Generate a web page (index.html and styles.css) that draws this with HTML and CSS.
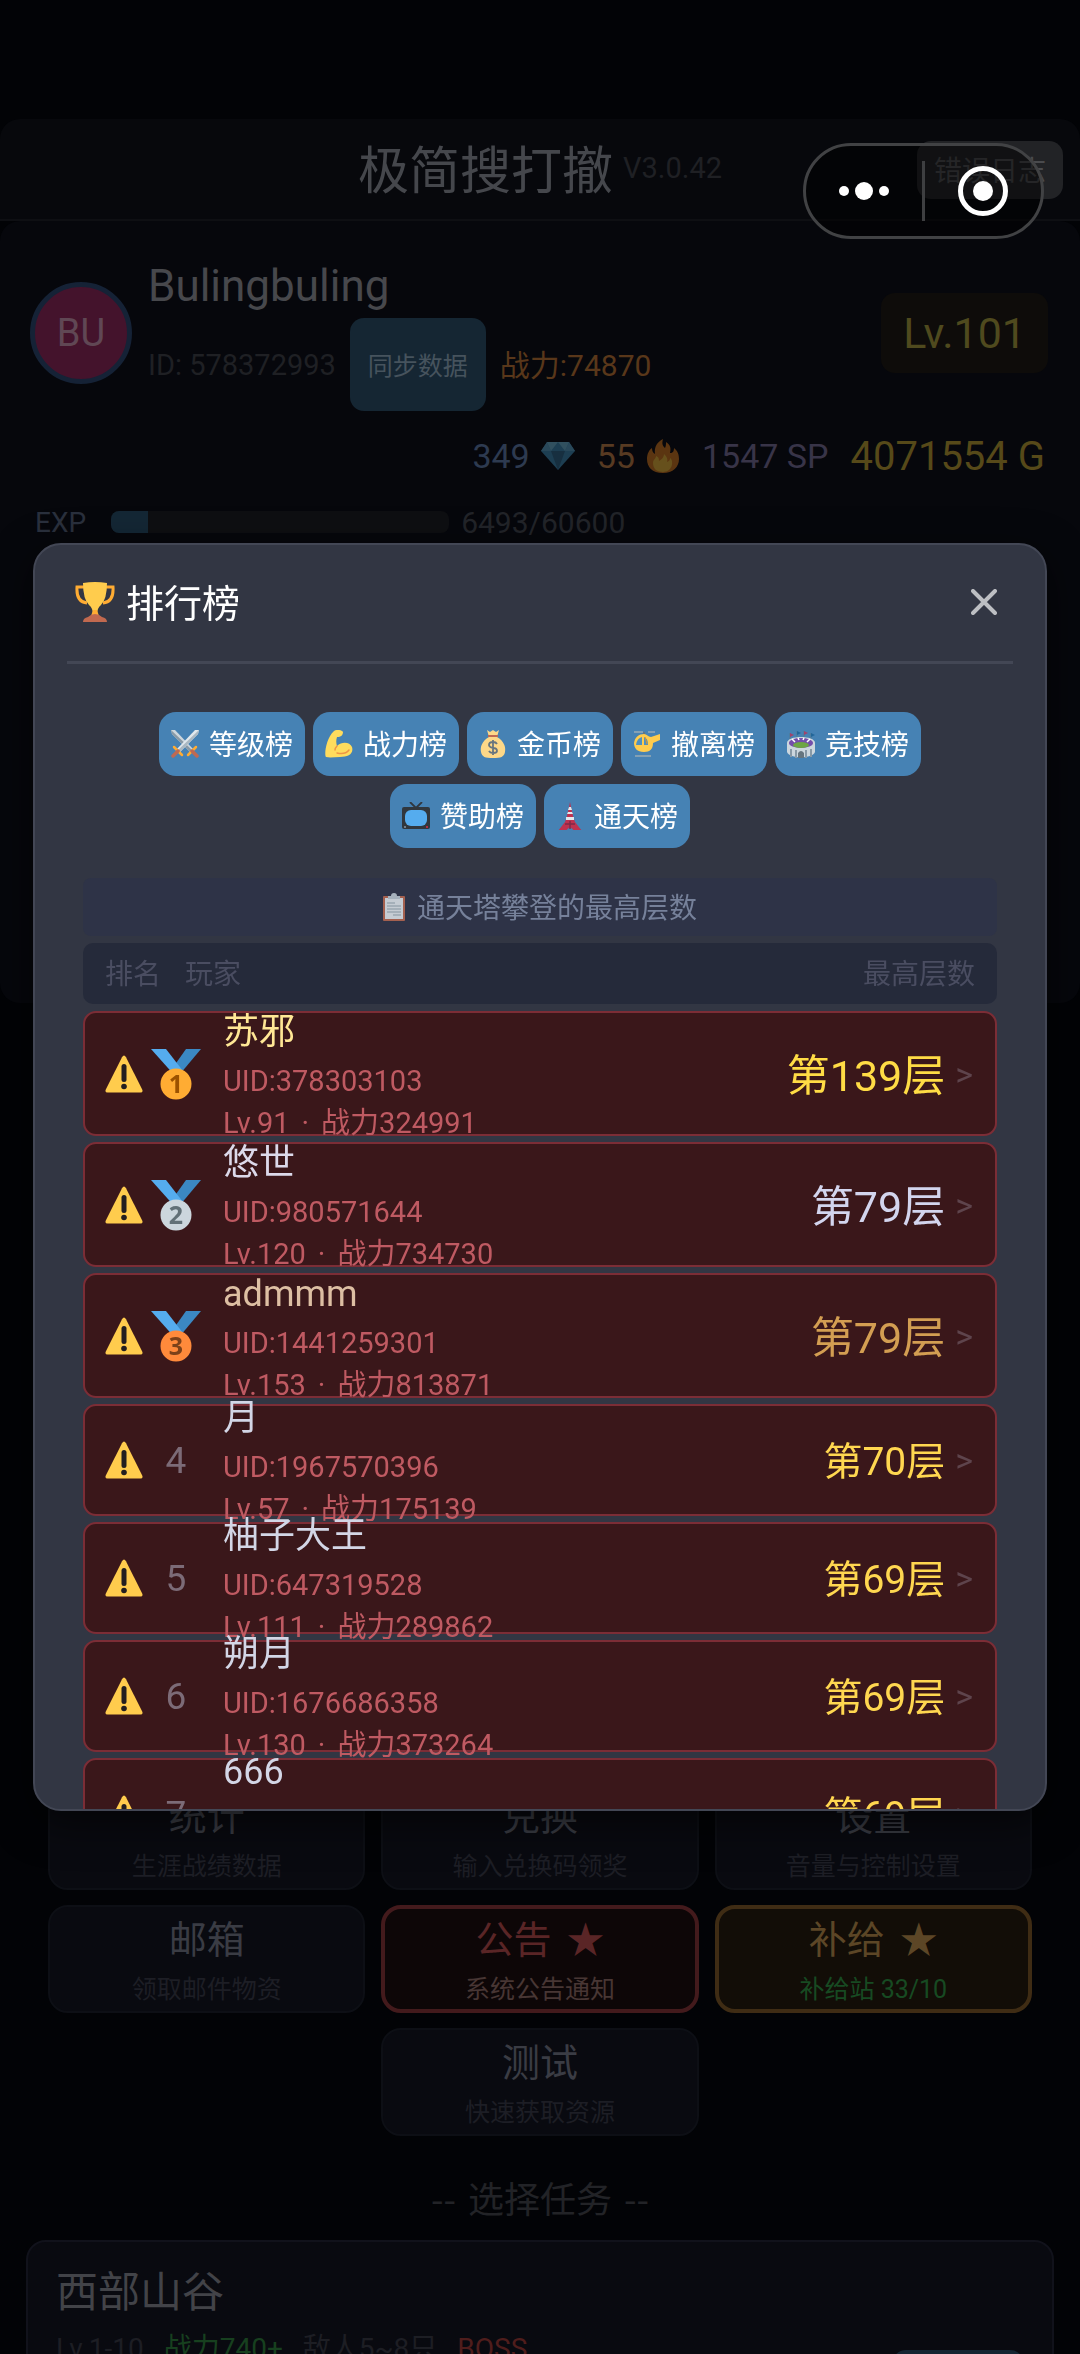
FILE: index.html
```html
<!DOCTYPE html>
<html lang="zh-CN">
<head>
<meta charset="utf-8">
<meta name="viewport" content="width=device-width, initial-scale=1">
<title>极简搜打撤</title>
<link rel="stylesheet" href="styles.css">
</head>
<body>
<svg class="sprite" aria-hidden="true">
  <symbol id="warn" viewBox="0 0 38 38">
    <path d="M17 2.200Q19-1 21 2.200L37.200 34.500Q38.400 37.500 35.500 37.500H2.500Q-.4 37.500.8 34.500Z" fill="#ffcc4d"/>
    <rect x="16.500" y="9" width="5" height="18" rx="2.500" fill="#231f20"/>
    <circle cx="19" cy="31.500" r="2.800" fill="#231f20"/>
  </symbol>
  <symbol id="ribbon" viewBox="0 0 50 52">
    <path d="M50 1H35L23 18l6 8Z" fill="#3b88c3"/>
    <path d="M0 1h15l17 22-7 6Z" fill="#55acee"/>
  </symbol>
</svg>

<div class="app">
  <header class="topbar">
    <h1 class="app-title">极简搜打撤</h1>
    <span class="version">V3.0.42</span>
    <button class="log-btn" type="button">错误日志</button>
  </header>

  <section class="player">
    <div class="player-head">
      <div class="avatar">BU</div>
      <div class="player-info">
        <div class="player-name">Bulingbuling</div>
        <div class="player-meta">
          <span class="player-id">ID: 578372993</span>
          <button class="sync-btn" type="button">同步数据</button>
          <span class="power">战力:74870</span>
        </div>
      </div>
      <div class="level">Lv.101</div>
    </div>
    <div class="wallet">
      <span class="coin gem">349
        <svg width="34" height="28" viewBox="0 0 34 28"><path d="M6 0H28L34 9 17 28 0 9Z" fill="#1d3e52"/><path d="M6 0 10 9H0ZM28 0 24 9H34Z" fill="#29485a"/><path d="M10 9H24L17 28Z" fill="#172f40"/><path d="M6 0H28L24 9 17 0 10 9Z" fill="#31505f"/></svg>
      </span>
      <span class="coin fire">55
        <svg width="34" height="34" viewBox="0 0 34 34"><path d="M17 34C6 34 1 28 1 20 1 15 3 11 6 9 6 12 7 14 9 15 8 8 11 3 17 0 16 4 16 6 19 9 20 7 20 5 20 3 25 6 25 10 24 14 27 14 28 12 28 9 32 12 33 16 33 20 33 28 27 34 17 34Z" fill="#5b3511"/><path d="M17 33C10 33 7 29 7 24 7 20 10 20 10 17 13 18 13 20 13 22 16 20 18 18 18 15 21 18 22 20 21 23 24 22 24 20 24 19 28 21 27 33 17 33Z" fill="#66501c"/></svg>
      </span>
      <span class="coin sp">1547 SP</span>
      <span class="coin gold">4071554 G</span>
    </div>
    <div class="exp">
      <span class="exp-label">EXP</span>
      <div class="exp-track"><div class="exp-fill" style="width:11%"></div></div>
      <span class="exp-value">6493/60600</span>
    </div>
  </section>

  <nav class="menu">
    <button class="tile" type="button"><span class="tile-title">统计</span><span class="tile-sub">生涯战绩数据</span></button>
    <button class="tile" type="button"><span class="tile-title">兑换</span><span class="tile-sub">输入兑换码领奖</span></button>
    <button class="tile" type="button"><span class="tile-title">设置</span><span class="tile-sub">音量与控制设置</span></button>
    <button class="tile" type="button"><span class="tile-title">邮箱</span><span class="tile-sub">领取邮件物资</span></button>
    <button class="tile tile-notice" type="button"><span class="tile-title">公告<span class="star">★</span></span><span class="tile-sub">系统公告通知</span></button>
    <button class="tile tile-supply" type="button"><span class="tile-title">补给<span class="star">★</span></span><span class="tile-sub">补给站 33/10</span></button>
    <button class="tile" type="button"><span class="tile-title">测试</span><span class="tile-sub">快速获取资源</span></button>
  </nav>

  <h2 class="section-title"><span>--</span><span>选择任务</span><span>--</span></h2>

  <article class="mission">
    <div>
      <h3 class="mission-name">西部山谷</h3>
      <div class="mission-meta">
        <span>Lv.1-10</span><span class="ok">战力740+</span><span>敌人5~8只</span><span class="boss">BOSS</span>
      </div>
    </div>
    <button class="mission-go" type="button" aria-label="进入任务"></button>
  </article>
</div>

<div class="overlay">
  <section class="modal" role="dialog" aria-labelledby="rank-title">
    <header class="modal-head">
      <svg width="40" height="40" viewBox="0 0 40 40"><path d="M9 5H2Q1 20 12 21M31 5h7Q39 20 28 21" fill="none" stroke="#ffac33" stroke-width="3"/><path d="M8 1Q20-1 32 1 32 17 26 23 22 26 22 33H18Q18 26 14 23 8 17 8 1Z" fill="#ffcc4d"/><path d="M18 28H22L24 34H16Z" fill="#ffac33"/><path d="M8 40Q8 36 13 35 16 32 20 32 24 32 27 35 32 36 32 40Z" fill="#c1694f"/></svg>
      <h2 class="modal-title" id="rank-title">排行榜</h2>
      <button class="close" type="button" aria-label="关闭"><svg width="26" height="26" viewBox="0 0 26 26"><path d="M2 2 24 24M24 2 2 24" stroke="#bdbfc3" stroke-width="4" stroke-linecap="round"/></svg></button>
    </header>

    <div class="modal-body">
      <div class="tabs">
        <button class="tab" type="button"><svg viewBox="0 0 28 28"><path d="M0 0H4L22 19 19 22 1 4Z" fill="#ccd6dd"/><path d="M0 0 21 20 19 22 1 4Z" fill="#8899a6"/><path d="M28 0H24L6 19 9 22 27 4Z" fill="#e1e8ed"/><path d="M28 0 7 20 9 22 27 4Z" fill="#aab8c2"/><path d="M3 17 11 25M25 17 17 25" stroke="#ffac33" stroke-width="2.500" stroke-linecap="round"/><path d="M7 21 2 26M21 21 26 26" stroke="#bf6952" stroke-width="3.500" stroke-linecap="round"/></svg><span>等级榜</span></button>
        <button class="tab" type="button"><svg viewBox="0 0 28 28"><path d="M9 1C12-1 17 0 18 2 18 5 16 7 12 7 11 10 11 13 12 16 17 11 25 12 27 17 29 24 23 27 15 27 10 27 5 28 1 27-1 25 1 8 9 1Z" fill="#ffdc5d"/><path d="M12 16Q10 18 10 20M24 20Q20 25 12 23" fill="none" stroke="#ef9645" stroke-width="1.500" stroke-linecap="round"/></svg><span>战力榜</span></button>
        <button class="tab" type="button"><svg viewBox="0 0 28 28"><path d="M8 0 11 2 14 0 17 2 20 0 18 7C25 11 27 17 26 22 25 27 22 28 14 28 6 28 3 27 2 22 1 17 3 11 10 7Z" fill="#fdd888"/><path d="M9 6H19" stroke="#bf6952" stroke-width="2"/><path d="M18 14Q17 12 14 12 10 12 10 15 10 17 14 18 18 18 18 21 18 23 14 23 11 23 10 21M14 10V25" fill="none" stroke="#67757f" stroke-width="1.800"/></svg><span>金币榜</span></button>
        <button class="tab" type="button"><svg viewBox="0 0 28 28"><path d="M1 2H10M15 2H22" stroke="#99aab5" stroke-width="1.500"/><path d="M11 2V6" stroke="#67757f" stroke-width="2"/><path d="M11 4C14 4 15 7 18 7L27 4V10L20 13C20 19 17 22 11 22 4 22 1 18 1 13 2 7 6 4 11 4Z" fill="#ffcc4d"/><path d="M9 7V15H3Q4 8 9 7ZM11 7Q15 8 15 15H11Z" fill="#4f90c0"/><path d="M12 7 14 14" stroke="#d9952d" stroke-width="1"/><path d="M2 26H18" stroke="#99aab5" stroke-width="1.500"/></svg><span>撤离榜</span></button>
        <button class="tab" type="button"><svg viewBox="0 0 28 28"><path d="M3 10V3M10 8V1M17 8V1M24 10V3" stroke="#55788c" stroke-width="1"/><path d="M3 3 7 5 3 7ZM17 1 21 3 17 5Z" fill="#a0436d"/><path d="M10 1 14 3 10 5ZM24 3 28 5 24 7Z" fill="#226699"/><path d="M0 13C0 5 28 5 28 13V22C26 29 2 29 0 22Z" fill="#ccd6dd"/><ellipse cx="14" cy="13" rx="12" ry="5" fill="#744eaa"/><ellipse cx="14" cy="15" rx="8" ry="3" fill="#6da544"/><path d="M4 19V27M9 20V28M19 20V28M24 19V27" stroke="#8899a6" stroke-width="2"/><path d="M11 28V23Q14 19 17 23V28Z" fill="#66757f"/><path d="M5 9 8 12M11 8 12 10M17 8 16 10M23 9 20 12" stroke="#fff" stroke-width="1.500"/></svg><span>竞技榜</span></button>
        <button class="tab" type="button"><svg viewBox="0 0 28 28"><path d="M8 0 14 6 20 0" fill="none" stroke="#31373d" stroke-width="1.800"/><rect x="0" y="5" width="28" height="22" rx="2" fill="#31373d"/><rect x="3" y="8" width="22" height="16" rx="6" fill="#55acee"/><circle cx="3" cy="25" r="1" fill="#8899a6"/><circle cx="25" cy="25" r="1" fill="#dd2e44"/></svg><span>赞助榜</span></button>
        <button class="tab" type="button"><svg viewBox="0 0 28 28"><path d="M14 0 15 5 17 14 19 20 26 29H18Q14 22 10 29H2L9 20 11 14 13 5Z" fill="#be3150"/><path d="M13 5H15L16 8H12ZM12 10H16L17 12H11Z" fill="#e1e8ed"/><path d="M10 15H18V18H10Z" fill="#e1e8ed"/><path d="M9 22H19M14 19V27" stroke="#7f2a48" stroke-width="1.500"/></svg><span>通天榜</span></button>
      </div>

      <p class="hint"><svg width="22" height="28" viewBox="0 0 22 28"><rect y="3" width="22" height="25" rx="1" fill="#a4604f"/><rect x="2" y="5" width="18" height="21" fill="#c5ccd3"/><path d="M5 6V3H8Q8 0 11 0 14 0 14 3H17V6Z" fill="#a6b1bc"/><path d="M4 10H12M4 13H18M4 16H18M4 19H18M10 22H18" stroke="#8593a0" stroke-width="1.200"/></svg><span>通天塔攀登的最高层数</span></p>

      <table class="board">
        <thead>
          <tr class="board-head"><th>排名</th><th>玩家</th><th class="last">最高层数</th></tr>
        </thead>
        <tbody>
          <tr class="row top gold-row">
            <td class="rank"><svg class="warn"><use href="#warn"/></svg><svg class="medal" viewBox="0 0 50 52"><use href="#ribbon" width="50" height="52"/><circle cx="25" cy="36" r="15.500" fill="#ffac33"/><text x="25" y="45" fill="#9c5200">1</text></svg></td>
            <td class="who"><div class="name">苏邪</div><div class="sub">UID:378303103</div><div class="sub">Lv.91<span class="dot">·</span>战力324991</div></td>
            <td class="score"><span>第139层</span><span class="more">&gt;</span></td>
          </tr>
          <tr class="row top silver-row">
            <td class="rank"><svg class="warn"><use href="#warn"/></svg><svg class="medal" viewBox="0 0 50 52"><use href="#ribbon" width="50" height="52"/><circle cx="25" cy="36" r="15.500" fill="#ccd6dd"/><text x="25" y="45" fill="#627077">2</text></svg></td>
            <td class="who"><div class="name">悠世</div><div class="sub">UID:980571644</div><div class="sub">Lv.120<span class="dot">·</span>战力734730</div></td>
            <td class="score"><span>第79层</span><span class="more">&gt;</span></td>
          </tr>
          <tr class="row top bronze-row">
            <td class="rank"><svg class="warn"><use href="#warn"/></svg><svg class="medal" viewBox="0 0 50 52"><use href="#ribbon" width="50" height="52"/><circle cx="25" cy="36" r="15.500" fill="#ff8a3b"/><text x="25" y="45" fill="#7c4119">3</text></svg></td>
            <td class="who"><div class="name">admmm</div><div class="sub">UID:1441259301</div><div class="sub">Lv.153<span class="dot">·</span>战力813871</div></td>
            <td class="score"><span>第79层</span><span class="more">&gt;</span></td>
          </tr>
          <tr class="row">
            <td class="rank"><svg class="warn"><use href="#warn"/></svg><span class="place">4</span></td>
            <td class="who"><div class="name">月</div><div class="sub">UID:1967570396</div><div class="sub">Lv.57<span class="dot">·</span>战力175139</div></td>
            <td class="score"><span>第70层</span><span class="more">&gt;</span></td>
          </tr>
          <tr class="row">
            <td class="rank"><svg class="warn"><use href="#warn"/></svg><span class="place">5</span></td>
            <td class="who"><div class="name">柚子大王</div><div class="sub">UID:647319528</div><div class="sub">Lv.111<span class="dot">·</span>战力289862</div></td>
            <td class="score"><span>第69层</span><span class="more">&gt;</span></td>
          </tr>
          <tr class="row">
            <td class="rank"><svg class="warn"><use href="#warn"/></svg><span class="place">6</span></td>
            <td class="who"><div class="name">朔月</div><div class="sub">UID:1676686358</div><div class="sub">Lv.130<span class="dot">·</span>战力373264</div></td>
            <td class="score"><span>第69层</span><span class="more">&gt;</span></td>
          </tr>
          <tr class="row">
            <td class="rank"><svg class="warn"><use href="#warn"/></svg><span class="place">7</span></td>
            <td class="who"><div class="name">666</div></td>
            <td class="score"><span>第69层</span><span class="more">&gt;</span></td>
          </tr>
        </tbody>
      </table>
    </div>
  </section>
</div>

<div class="capsule">
  <button class="cap-btn" type="button" aria-label="更多"><svg width="50" height="20" viewBox="0 0 50 20"><g fill="#fff"><circle cx="5" cy="10" r="5"/><circle cx="25" cy="10" r="9"/><circle cx="45" cy="10" r="5"/></g></svg></button>
  <span class="cap-line"></span>
  <button class="cap-btn" type="button" aria-label="关闭小程序"><svg width="50" height="50" viewBox="0 0 50 50"><circle cx="25" cy="25" r="22.500" fill="none" stroke="#fff" stroke-width="5"/><circle cx="25" cy="25" r="10" fill="#fff"/></svg></button>
</div>
</body>
</html>
```
FILE: styles.css
```css
* { box-sizing: border-box; }

body {
  margin: 0;
  background: #020306;
  color: #42434a;
  font-family: Roboto, "Noto Sans CJK SC", sans-serif;
  font-size: 28px;
}

h1, h2, h3, p { margin: 0; font-weight: 400; }

button {
  margin: 0;
  padding: 0;
  border: 0;
  background: none;
  color: inherit;
  font: inherit;
}

svg { display: block; flex: none; }
.sprite { position: absolute; width: 0; height: 0; }

.app {
  height: 100vh;
  overflow: hidden;
  padding-top: 119px;
}

/* top bar */
.topbar {
  position: relative;
  display: flex;
  align-items: center;
  justify-content: center;
  gap: 10px;
  height: 102px;
  padding-bottom: 4px;
  background: #07080c;
  border-bottom: 2px solid #0e0f13;
  border-radius: 20px 20px 0 0;
}
.app-title { font-size: 51px; color: #45474c; }
.version { padding-top: 2px; font-size: 29px; color: #1f2024; }
.log-btn {
  position: absolute;
  top: 22px;
  right: 17px;
  height: 58px;
  padding: 0 17px 2px;
  border-radius: 14px;
  background: #222326;
  color: #4a4b4e;
}

/* player panel */
.player {
  min-height: 782px;
  padding: 33px 32px 0 30px;
  background: #06070c;
  border-radius: 20px;
}
.player-head { display: flex; align-items: center; gap: 16px; }
.avatar {
  display: flex;
  align-items: center;
  justify-content: center;
  width: 102px;
  height: 102px;
  border: 5px solid #152236;
  border-radius: 50%;
  background: #44132c;
  color: #604754;
  font-size: 38px;
}
.player-info { flex: 1; }
.player-name { font-size: 44px; line-height: 64px; color: #47484c; }
.player-meta { display: flex; align-items: center; gap: 14px; }
.player-id { font-size: 29px; color: #1f2024; }
.sync-btn {
  height: 93px;
  padding: 0 18px 2px;
  border-radius: 14px;
  background: #152633;
  color: #46535d;
  font-size: 25px;
}
.power { padding-bottom: 3px; font-size: 30px; color: #59371a; }
.level {
  padding: 0 22px;
  border-radius: 14px;
  background: #0e0c0a;
  color: #4f4a1e;
  font-size: 43px;
  line-height: 80px;
}
.wallet {
  display: flex;
  align-items: center;
  justify-content: flex-end;
  gap: 22px;
  height: 60px;
  margin-top: 15px;
  padding-right: 3px;
}
.coin { display: flex; align-items: center; gap: 11px; font-size: 34px; }
.gem { color: #2d3a50; }
.fire { color: #573a22; }
.sp { color: #383448; }
.gold { color: #564919; font-size: 40px; }
.exp {
  display: flex;
  align-items: center;
  height: 40px;
  margin: 16px 0 0 5px;
}
.exp-label { color: #2a303d; margin-right: 25px; }
.exp-track {
  flex: 0 1 338px;
  height: 22px;
  margin-right: 12px;
  border-radius: 8px;
  background: #0e0f12;
  overflow: hidden;
}
.exp-fill { height: 100%; background: #142735; }
.exp-value { font-size: 30px; color: #222429; }

/* menu tiles */
.menu {
  display: flex;
  flex-wrap: wrap;
  justify-content: center;
  gap: 15px 16px;
  margin-top: 779px;
  padding: 0 48px;
}
.tile {
  display: flex;
  flex-direction: column;
  align-items: center;
  justify-content: center;
  flex: 0 0 calc((100% - 32px) / 3);
  height: 108px;
  padding-top: 8px;
  border: 2px solid #0d0f15;
  border-radius: 20px;
  background: #090a10;
  color: #3a3c44;
}
.tile-title { font-size: 38px; line-height: 54px; }
.star { margin-left: 15px; }
.tile-sub { font-size: 25px; line-height: 46px; color: #1d1e25; }
.tile-notice { border: 4px solid #431a1c; background: #0d0607; color: #5a2526; }
.tile-notice .tile-sub { color: #483634; }
.tile-supply { border: 4px solid #3f2c14; background: #120d07; color: #5c4626; }
.tile-supply .tile-sub { color: #174a22; }

.section-title {
  display: flex;
  justify-content: center;
  gap: 12px;
  margin-top: 31px;
  font: 400 36px/60px "Noto Sans CJK SC", sans-serif;
  color: #222327;
}

.mission {
  display: flex;
  justify-content: space-between;
  height: 300px;
  margin: 13px 26px 0;
  padding: 21px 28px 0;
  border: 2px solid #11121b;
  border-radius: 20px;
  background: #090a10;
}
.mission-name { font-size: 42px; line-height: 60px; color: #424348; }
.mission-meta {
  display: flex;
  gap: 20px;
  margin-top: 4px;
  line-height: 44px;
  color: #1d1e24;
}
.ok { color: #17401f; }
.boss { color: #4f1d1c; }
.mission-go {
  width: 132px;
  height: 93px;
  margin-top: 87px;
  border-radius: 14px;
  background: #152633;
}

/* ranking dialog */
.overlay {
  position: fixed;
  inset: 0;
  display: flex;
  align-items: center;
  padding: 0 33px;
}
.modal {
  flex: 1;
  max-height: 1268px;
  overflow: hidden;
  padding: 0 32px;
  border: 2px solid #434755;
  border-radius: 28px;
  background: #323643;
  box-shadow: 0 12px 40px rgba(0, 0, 0, .6);
}
.modal-head {
  display: flex;
  align-items: center;
  height: 119px;
  padding: 0 12px 2px 8px;
  border-bottom: 3px solid #434755;
  color: #fff;
}
.modal-title { flex: 1; margin-left: 11px; padding-bottom: 4px; font-size: 38px; }
.close { padding: 4px; }
.modal-body { padding: 48px 16px 0; }

.tabs { display: flex; flex-wrap: wrap; justify-content: center; gap: 8px; }
.tab {
  display: flex;
  align-items: center;
  gap: 10px;
  height: 64px;
  padding: 0 12px;
  border-radius: 17px;
  background: #4682b4;
  color: #fff;
}
.tab svg { width: 28px; height: 28px; }
.tab span, .hint span { padding-bottom: 3px; }

.hint {
  display: flex;
  align-items: center;
  justify-content: center;
  gap: 12px;
  height: 58px;
  margin-top: 30px;
  border-radius: 8px;
  background: #2e3347;
  color: #76819a;
}

.board { display: block; margin-top: 7px; }
.board thead { display: block; }
.board tbody { display: flex; flex-direction: column; gap: 6px; margin-top: 7px; }
.board th, .board td { padding: 0; font-weight: 400; text-align: left; }
.board-head {
  display: flex;
  align-items: center;
  gap: 24px;
  height: 61px;
  padding: 0 22px 3px;
  border-radius: 10px;
  background: #252a3a;
  color: #4a4d61;
}
.board-head .last { margin-left: auto; }

.row {
  display: flex;
  align-items: center;
  height: 112px;
  padding: 0 22px 0 20px;
  border: 2px solid #7c2d36;
  border-radius: 13px;
  background: #3a171a;
}
.row.top { height: 125px; }
.rank { display: flex; align-items: center; gap: 8px; }
.warn { width: 38px; height: 38px; }
.medal { width: 50px; height: 52px; }
.medal text { font: 700 25px "Noto Sans", sans-serif; text-anchor: middle; }
.place { width: 50px; text-align: center; font-size: 37px; color: #7c6b77; }
.who { flex: 1; height: 140px; margin-left: 22px; }
.name { font-size: 36px; line-height: 56px; color: #d3d6e6; }
.sub { font-size: 29px; line-height: 42px; color: #bf5a62; }
.dot { margin: 0 12px; }
.score { display: flex; align-items: center; gap: 10px; font-size: 39px; color: #ffd750; }
.score span:first-child { padding-bottom: 4px; }
.top .score { font-size: 43px; }
.score .more { font-size: 34px; color: #5e444c; }
.gold-row .name { color: #ffe795; }
.gold-row .score { color: #ffdc45; }
.silver-row .name { color: #dcd9ea; }
.silver-row .score { color: #d3d5ee; }
.bronze-row .name { color: #ddbfa3; }
.bronze-row .score { color: #d39e52; }

/* system capsule */
.capsule {
  position: fixed;
  top: 143px;
  right: 36px;
  display: flex;
  align-items: center;
  width: 241px;
  height: 96px;
  border: 3px solid #414244;
  border-radius: 48px;
  background: rgba(0, 0, 0, .5);
}
.cap-btn { display: flex; flex: 1; align-items: center; justify-content: center; }
.cap-line { width: 3px; height: 60px; background: #3e3f41; }
```
